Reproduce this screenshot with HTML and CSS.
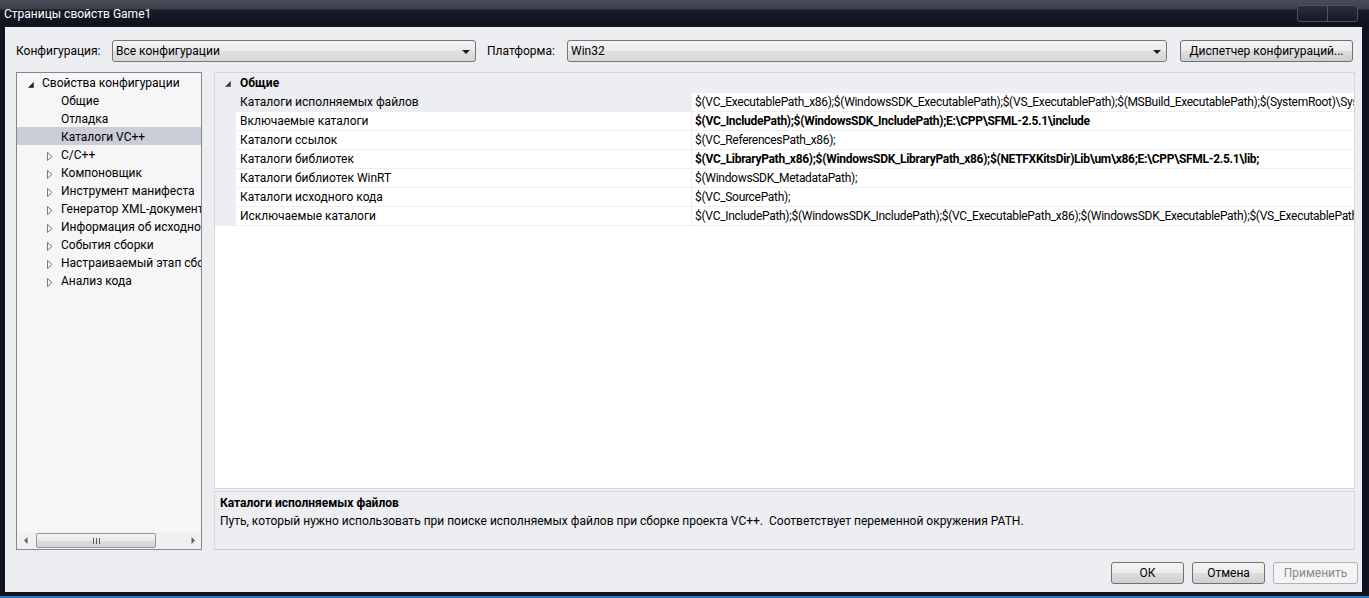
FILE: index.html
```html
<!DOCTYPE html>
<html lang="ru">
<head>
<meta charset="utf-8">
<title>Страницы свойств Game1</title>
<link rel="stylesheet" href="styles.css">
</head>
<body>
<div class="window">
  <div class="titlebar">
    <span class="title">Страницы свойств Game1</span>
    <div class="capbtns"><span class="capbtn"></span><span class="capbtn"></span></div>
  </div>
  <div class="client">
    <div class="toolbar">
      <span class="lbl lbl-config">Конфигурация:</span>
      <div class="combo combo-config"><span class="combo-text">Все конфигурации</span><i class="arrow"></i></div>
      <span class="lbl lbl-platform">Платформа:</span>
      <div class="combo combo-platform"><span class="combo-text">Win32</span><i class="arrow"></i></div>
      <button class="btn btn-manager">Диспетчер конфигураций...</button>
    </div>
    <div class="main">
      <div class="tree">
        <div class="tree-items">
          <div class="node root"><span class="exp"><svg width="6" height="6" viewBox="0 0 6 6"><path d="M5.5 0.5 L5.5 5.5 L0.5 5.5 Z" fill="#262626" stroke="#262626" stroke-width="0.6"/></svg></span>Свойства конфигурации</div>
          <div class="node leaf">Общие</div>
          <div class="node leaf">Отладка</div>
          <div class="node leaf selected">Каталоги VC++</div>
          <div class="node branch"><span class="exp"><svg width="6" height="9" viewBox="0 0 6 9"><path d="M0.5 0.5 L5 4.5 L0.5 8.5 Z" fill="none" stroke="#7a7a7a" stroke-width="1"/></svg></span>C/C++</div>
          <div class="node branch"><span class="exp"><svg width="6" height="9" viewBox="0 0 6 9"><path d="M0.5 0.5 L5 4.5 L0.5 8.5 Z" fill="none" stroke="#7a7a7a" stroke-width="1"/></svg></span>Компоновщик</div>
          <div class="node branch"><span class="exp"><svg width="6" height="9" viewBox="0 0 6 9"><path d="M0.5 0.5 L5 4.5 L0.5 8.5 Z" fill="none" stroke="#7a7a7a" stroke-width="1"/></svg></span>Инструмент манифеста</div>
          <div class="node branch"><span class="exp"><svg width="6" height="9" viewBox="0 0 6 9"><path d="M0.5 0.5 L5 4.5 L0.5 8.5 Z" fill="none" stroke="#7a7a7a" stroke-width="1"/></svg></span>Генератор XML-документов</div>
          <div class="node branch"><span class="exp"><svg width="6" height="9" viewBox="0 0 6 9"><path d="M0.5 0.5 L5 4.5 L0.5 8.5 Z" fill="none" stroke="#7a7a7a" stroke-width="1"/></svg></span>Информация об исходном коде</div>
          <div class="node branch"><span class="exp"><svg width="6" height="9" viewBox="0 0 6 9"><path d="M0.5 0.5 L5 4.5 L0.5 8.5 Z" fill="none" stroke="#7a7a7a" stroke-width="1"/></svg></span>События сборки</div>
          <div class="node branch"><span class="exp"><svg width="6" height="9" viewBox="0 0 6 9"><path d="M0.5 0.5 L5 4.5 L0.5 8.5 Z" fill="none" stroke="#7a7a7a" stroke-width="1"/></svg></span>Настраиваемый этап сборки</div>
          <div class="node branch"><span class="exp"><svg width="6" height="9" viewBox="0 0 6 9"><path d="M0.5 0.5 L5 4.5 L0.5 8.5 Z" fill="none" stroke="#7a7a7a" stroke-width="1"/></svg></span>Анализ кода</div>
        </div>
        <div class="hscroll">
          <span class="sb-arrow"><svg width="4" height="7" viewBox="0 0 4 7"><path d="M3.5 0 L0 3.5 L3.5 7 Z" fill="#606060"/></svg></span>
          <span class="sb-thumb"><span class="grip"><i></i><i></i><i></i></span></span>
          <span class="sb-track"></span>
          <span class="sb-arrow"><svg width="4" height="7" viewBox="0 0 4 7"><path d="M0.5 0 L4 3.5 L0.5 7 Z" fill="#606060"/></svg></span>
        </div>
      </div>
      <div class="right">
        <div class="grid">
          <div class="cat"><span class="cat-exp"><svg width="6" height="6" viewBox="0 0 6 6"><path d="M5.5 0.5 L5.5 5.5 L0.5 5.5 Z" fill="#404040" stroke="#404040" stroke-width="0.6"/></svg></span>Общие</div>
          <div class="row sel"><span class="gutter"></span><span class="name">Каталоги исполняемых файлов</span><span class="value">$(VC_ExecutablePath_x86);$(WindowsSDK_ExecutablePath);$(VS_ExecutablePath);$(MSBuild_ExecutablePath);$(SystemRoot)\SysWow64;$(FxCopDir);$(PATH);</span></div>
          <div class="row"><span class="gutter"></span><span class="name">Включаемые каталоги</span><span class="value bold">$(VC_IncludePath);$(WindowsSDK_IncludePath);E:\CPP\SFML-2.5.1\include</span></div>
          <div class="row"><span class="gutter"></span><span class="name">Каталоги ссылок</span><span class="value">$(VC_ReferencesPath_x86);</span></div>
          <div class="row"><span class="gutter"></span><span class="name">Каталоги библиотек</span><span class="value bold">$(VC_LibraryPath_x86);$(WindowsSDK_LibraryPath_x86);$(NETFXKitsDir)Lib\um\x86;E:\CPP\SFML-2.5.1\lib;</span></div>
          <div class="row"><span class="gutter"></span><span class="name">Каталоги библиотек WinRT</span><span class="value">$(WindowsSDK_MetadataPath);</span></div>
          <div class="row"><span class="gutter"></span><span class="name">Каталоги исходного кода</span><span class="value">$(VC_SourcePath);</span></div>
          <div class="row"><span class="gutter"></span><span class="name">Исключаемые каталоги</span><span class="value">$(VC_IncludePath);$(WindowsSDK_IncludePath);$(VC_ExecutablePath_x86);$(WindowsSDK_ExecutablePath);$(VS_ExecutablePath);$(MSBuild_ExecutablePath);$(VC_LibraryPath_x86);</span></div>
        </div>
        <div class="desc">
          <div class="desc-title">Каталоги исполняемых файлов</div>
          <div class="desc-text">Путь, который нужно использовать при поиске исполняемых файлов при сборке проекта VC++.  Соответствует переменной окружения PATH.</div>
        </div>
      </div>
    </div>
    <div class="footer">
      <button class="btn btn-ok">ОК</button>
      <button class="btn btn-cancel">Отмена</button>
      <button class="btn btn-apply" disabled>Применить</button>
    </div>
  </div>
  <div class="frame-bottom"></div>
  <div class="taskbar"></div>
</div>
</body>
</html>
```

FILE: styles.css
```css
* { box-sizing: border-box; }
html, body { margin: 0; padding: 0; }
body {
  width: 1369px;
  height: 598px;
  overflow: hidden;
  background: #10131f;
  font-family: Roboto, "Noto Sans", sans-serif;
  font-size: 12px;
  color: #000;
}
.window {
  display: flex;
  flex-direction: column;
  width: 1369px;
  height: 598px;
}
.titlebar {
  flex: none;
  height: 27px;
  display: flex;
  justify-content: space-between;
  align-items: flex-start;
  padding: 0 11px 0 4px;
  background: linear-gradient(to bottom, #4a4d58 0, #3b3e49 9px, #171b27 10px, #0f121d 27px);
}
.title {
  color: #fff;
  line-height: 28px;
}
.capbtns {
  display: flex;
  margin-top: 5px;
  width: 61px;
  height: 17px;
  border: 1px solid #4e525e;
  border-radius: 3px;
  background: linear-gradient(#2a2e3a, #161925);
  overflow: hidden;
}
.capbtn { flex: 1; }
.capbtn + .capbtn { border-left: 1px solid #4e525e; }

.client {
  flex: none;
  height: 565px;
  margin: 0 7px 0 5px;
  background: #eceef2;
  padding: 13px 7px 8px 11px;
  display: flex;
  flex-direction: column;
}
.frame-bottom { flex: 1; }
.taskbar { flex: none; height: 2px; background: #2a78c0; }

/* toolbar */
.toolbar {
  flex: none;
  display: flex;
  align-items: center;
  height: 22px;
  padding-right: 2px;
}
.lbl { flex: none; white-space: nowrap; }
.lbl-config { width: 96px; }
.lbl-platform { width: 80px; margin-left: 11px; }
.combo {
  height: 22px;
  border: 1px solid #767676;
  border-radius: 3px;
  background: linear-gradient(#f4f4f4, #ebebeb 50%, #e0e0e0 51%, #d7d7d7);
  display: flex;
  align-items: center;
  padding: 0 5px 0 3px;
}
.combo-config { width: 364px; flex: none; }
.combo-platform { flex: 1; }
.combo-text { flex: 1; white-space: nowrap; }
.arrow {
  width: 0;
  height: 0;
  border-left: 4px solid transparent;
  border-right: 4px solid transparent;
  border-top: 4px solid #1a1a1a;
  margin-top: 1px;
}
.btn {
  font: inherit;
  color: #000;
  height: 22px;
  padding: 0;
  border: 1px solid #707070;
  border-radius: 3px;
  background: linear-gradient(#f3f3f3, #ebebeb 50%, #dddddd 51%, #cfcfcf);
  white-space: nowrap;
}
.btn-manager { width: 173px; margin-left: 13px; flex: none; }

/* main */
.main {
  flex: none;
  display: flex;
  gap: 12px;
  margin-top: 10px;
  height: 478px;
}
.tree {
  width: 186px;
  flex: none;
  border: 1px solid #828790;
  background: #f6f6f6;
  display: flex;
  flex-direction: column;
}
.tree-items { flex: 1; overflow: hidden; }
.node {
  height: 18px;
  padding-top: 2px;
  display: flex;
  align-items: center;
  white-space: nowrap;
  overflow: hidden;
}
.node.root { padding-left: 11px; }
.node.branch { padding-left: 30px; }
.node.leaf { padding-left: 44px; }
.node.selected { background: #cbcdd8; }
.exp {
  flex: none;
  width: 14px;
  display: flex;
  align-items: center;
}
.node.root .exp svg { margin-top: 3px; }
.node.branch .exp svg { margin-top: 2px; }

.hscroll {
  flex: none;
  height: 17px;
  display: flex;
  align-items: center;
  background: #f0f0f0;
}
.sb-arrow {
  flex: none;
  width: 17px;
  height: 17px;
  display: flex;
  align-items: center;
  justify-content: center;
}
.sb-thumb {
  flex: none;
  width: 120px;
  height: 15px;
  margin-left: 2px;
  border: 1px solid #979797;
  border-radius: 2px;
  background: linear-gradient(#f2f2f2, #e9e9e9 50%, #dcdcdc 51%, #d4d4d4);
  display: flex;
  align-items: center;
  justify-content: center;
}
.grip { display: flex; gap: 2px; }
.grip i { display: block; width: 1px; height: 6px; background: #5a5a5a; }
.sb-track { flex: 1; }

.right {
  flex: 1;
  display: flex;
  flex-direction: column;
  gap: 2px;
  min-width: 0;
}
.grid {
  flex: none;
  height: 417px;
  border: 1px solid #d4d8de;
  background: #fff;
  overflow: hidden;
}
.cat {
  height: 20px;
  background: #eceef2;
  display: flex;
  align-items: center;
  font-weight: bold;
}
.cat-exp {
  width: 25px;
  padding-left: 10px;
  display: flex;
  align-items: center;
}
.cat-exp svg { margin-top: 1px; }
.row {
  display: flex;
  height: 19px;
  border-bottom: 1px solid #eceef2;
}
.gutter { flex: none; width: 21px; background: #eceef2; }
.name {
  flex: none;
  width: 456px;
  padding-left: 4px;
  border-right: 1px solid #eceef2;
  line-height: 18px;
  white-space: nowrap;
  overflow: hidden;
}
.row.sel .name { background: #eceef2; }
.value {
  flex: 1;
  min-width: 0;
  padding-left: 3px;
  line-height: 18px;
  white-space: nowrap;
  overflow: hidden;
  letter-spacing: -0.3px;
}
.bold { font-weight: bold; }

.desc {
  flex: 1;
  border: 1px solid #d4d8de;
  border-bottom-color: #c8ccd2;
  background: #eceef2;
  padding: 2px 5px;
  line-height: 18px;
}
.desc-title { font-weight: bold; }
.desc-text { white-space: pre; }

.footer {
  flex: none;
  display: flex;
  justify-content: flex-end;
  gap: 8px;
  margin-top: 12px;
  margin-right: -3px;
  height: 22px;
}
.btn-ok, .btn-cancel { width: 73px; }
.btn-apply {
  width: 85px;
  color: #8a8a8a;
  border-color: #adb2b5;
  background: #f4f4f4;
}
```
